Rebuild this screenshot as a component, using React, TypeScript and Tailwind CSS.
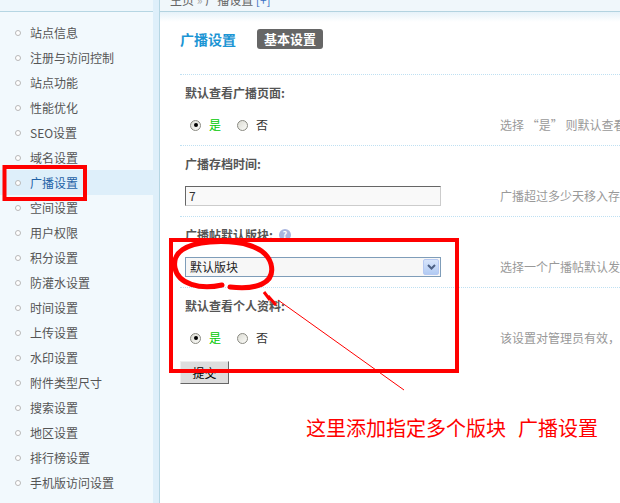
import React from 'react'

const menu = [
  '站点信息',
  '注册与访问控制',
  '站点功能',
  '性能优化',
  'SEO设置',
  '域名设置',
  '广播设置',
  '空间设置',
  '用户权限',
  '积分设置',
  '防灌水设置',
  '时间设置',
  '上传设置',
  '水印设置',
  '附件类型尺寸',
  '搜索设置',
  '地区设置',
  '排行榜设置',
  '手机版访问设置',
]

function Radio({ checked }: { checked?: boolean }) {
  return (
    <span className="w-[11px] h-[11px] rounded-full border border-[#8a8a82] bg-gradient-to-br from-[#dcdcd4] to-[#fbfbf8] flex items-center justify-center">
      {checked && <span className="w-[4px] h-[4px] rounded-full bg-black" />}
    </span>
  )
}

function YesNo() {
  return (
    <div className="flex items-center pl-[10px]">
      <Radio checked />
      <span className="ml-[8px] text-[#00c800]">是</span>
      <span className="ml-[16px]">
        <Radio />
      </span>
      <span className="ml-[8px] text-[#333]">否</span>
    </div>
  )
}

function Setting({
  label,
  help,
  hint,
  children,
}: {
  label: string
  help?: boolean
  hint: string
  children: React.ReactNode
}) {
  return (
    <div className="border-t border-dotted border-[#bfe0f2]">
      <div className="h-[35px] flex items-center pl-[5px] font-bold text-[#555]">
        {label}:
        {help && (
          <span className="ml-[6px] w-[12px] h-[12px] rounded-full bg-[#a9b5df] text-white text-[9px] leading-[12px] text-center">
            ?
          </span>
        )}
      </div>
      <div className="h-[30px] mb-[5px] flex items-center">
        <div className="w-[320px] shrink-0">{children}</div>
        <div className="text-[#999] whitespace-nowrap">{hint}</div>
      </div>
    </div>
  )
}

export default function App() {
  return (
    <div
      className="relative w-[620px] h-[503px] overflow-hidden bg-white text-[12px] flex"
      style={{ fontFamily: '"Noto Sans CJK SC", "Liberation Sans", sans-serif' }}
    >
      {/* sidebar */}
      <div className="w-[160px] shrink-0 flex bg-[#deeffa]">
        <div className="w-[153px] bg-[#f2f9fd] flex flex-col">
          <div className="h-[12px] border-b border-[#b6d6e3] bg-[#eef7fc]" />
          <ul className="pt-[8px]">
            {menu.map((m) => {
              const active = m === '广播设置'
              return (
                <li
                  key={m}
                  className={`h-[25px] flex items-center pl-[15px] ${active ? 'bg-[#deeffa] text-[#1f62a6]' : 'text-[#555]'}`}
                >
                  <span className="w-[6px] h-[6px] rounded-full border border-[#b8b8b8] bg-white" />
                  <span className="ml-[9px] whitespace-nowrap">{m}</span>
                </li>
              )
            })}
          </ul>
        </div>
        <div className="w-px bg-[#f5fafd] ml-auto" />
      </div>

      {/* main */}
      <div className="flex-1 flex flex-col border-l border-[#b6d6e3] -ml-px">
        <div className="h-[12px] shrink-0 bg-[#f0f7fb] border-b border-[#b3d3e0] overflow-hidden pl-[10px]">
          <div className="-mt-[9px] text-[#666] whitespace-nowrap leading-[18px]">
            主页 <span className="text-[#aaa]">»</span> 广播设置 <span className="text-[#3a72c4]">[+]</span>
          </div>
        </div>
        <div className="h-[10px] shrink-0 bg-gradient-to-b from-[#e6f2f9] to-white" />
        <div className="pl-[20px]">
          <div className="h-[52px] flex items-center -mt-[9px]">
            <h1 className="text-[14px] font-bold text-[#1c95d4]">广播设置</h1>
            <span className="ml-[21px] px-[7px] h-[20px] leading-[20px] rounded-[3px] bg-[#666] text-white font-bold text-[13px]">
              基本设置
            </span>
          </div>
          <div className="h-[9px]" />

          <Setting label="默认查看广播页面" hint="选择 “是” 则默认查看我的广播">
            <YesNo />
          </Setting>
          <Setting label="广播存档时间" hint="广播超过多少天移入存档">
            <div className="ml-[5px] w-[256px] h-[20px] bg-[#f9f9f9] border border-t-[#666] border-l-[#666] border-r-[#ccc] border-b-[#ccc] pl-[3px] leading-[18px] text-[#333]">
              7
            </div>
          </Setting>
          <Setting label="广播帖默认版块" help hint="选择一个广播帖默认发布的版块">
            <div className="ml-[5px] w-[256px] h-[20px] border border-[#7f9db9] bg-[#f7f7f7] flex items-center">
              <span className="pl-[4px] flex-1 text-[#222]">默认版块</span>
              <span className="w-[16px] h-[16px] mr-px rounded-[2px] border border-[#b6c9f2] bg-gradient-to-b from-[#d8e5fb] to-[#b2cbf3] flex items-center justify-center">
                <svg width="9" height="6" viewBox="0 0 9 6">
                  <path d="M1 1 L4.5 4.5 L8 1" fill="none" stroke="#4d6185" strokeWidth="2" />
                </svg>
              </span>
            </div>
          </Setting>
          <Setting label="默认查看个人资料" hint="该设置对管理员有效，其他用户无效">
            <YesNo />
          </Setting>

          <button className="mt-[3px] w-[49px] h-[23px] bg-[#ddd] border border-t-[#eee] border-l-[#eee] border-r-[#666] border-b-[#666] text-black text-[12px]">
            提交
          </button>
        </div>
      </div>

      {/* annotations */}
      <svg className="absolute left-0 top-0 pointer-events-none" width="620" height="503">
        <rect x="4.5" y="167" width="80.5" height="32" fill="none" stroke="#ff0000" strokeWidth="4" />
        <rect x="171" y="240" width="286" height="131" fill="none" stroke="#ff0000" strokeWidth="4" />
        <path
          d="M230 287 C255 290 276 284 271 264 C266 246 240 240 210 242 C186 244 172 252 175 268 C178 284 200 290 222 285"
          fill="none"
          stroke="#ff0000"
          strokeWidth="5"
          strokeLinecap="round"
        />
        <path d="M264 292 L270 300 M268 296 L276 305" stroke="#ff0000" strokeWidth="3" />
        <line x1="278" y1="300" x2="404" y2="390" stroke="#ff0000" strokeWidth="1" />
      </svg>
      <div className="absolute left-[306px] top-[418px] text-[#ff0000] text-[20px] leading-[20px] whitespace-nowrap">
        这里添加指定多个版块<span className="ml-[12px]">广播设置</span>
      </div>
    </div>
  )
}
